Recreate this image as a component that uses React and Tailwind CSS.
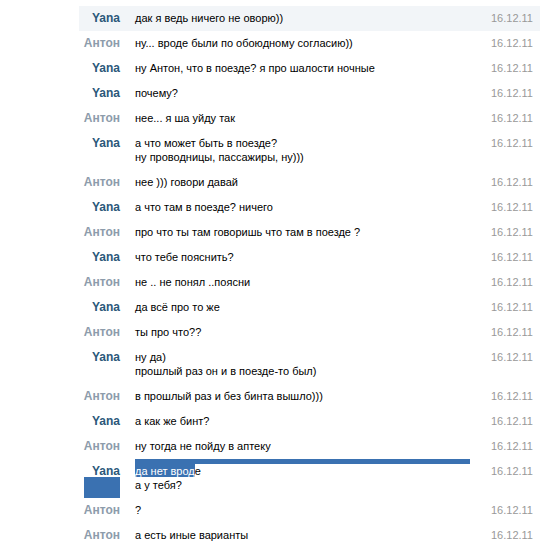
import React from "react";

const rows = [
  { who: "Yana", lines: ["дак я ведь ничего не оворю))"], hl: true },
  { who: "Антон", lines: ["ну... вроде были по обоюдному согласию))"] },
  { who: "Yana", lines: ["ну Антон, что в поезде? я про шалости ночные"] },
  { who: "Yana", lines: ["почему?"] },
  { who: "Антон", lines: ["нее... я ша уйду так"] },
  { who: "Yana", lines: ["а что может быть в поезде?", "ну проводницы, пассажиры, ну)))"] },
  { who: "Антон", lines: ["нее ))) говори давай"] },
  { who: "Yana", lines: ["а что там в поезде? ничего"] },
  { who: "Антон", lines: ["про что ты там говоришь что там в поезде ?"] },
  { who: "Yana", lines: ["что тебе пояснить?"] },
  { who: "Антон", lines: ["не .. не понял ..поясни"] },
  { who: "Yana", lines: ["да всё про то же"] },
  { who: "Антон", lines: ["ты про что??"] },
  { who: "Yana", lines: ["ну да)", "прошлый раз он и в поезде-то был)"] },
  { who: "Антон", lines: ["в прошлый раз и без бинта вышло)))"] },
  { who: "Yana", lines: ["а как же бинт?"] },
  { who: "Антон", lines: ["ну тогда не пойду в аптеку"] },
  { who: "Yana", lines: ["да нет вроде", "а у тебя?"], sel: true },
  { who: "Антон", lines: ["?"] },
  { who: "Антон", lines: ["а есть иные варианты"] },
];

const Row = ({ row }) => {
  const yana = row.who === "Yana";
  return (
    <div className={`flex pt-[5px] pb-[6px] ${row.hl ? "bg-[#f2f5f8]" : ""}`}>
      <div className={`relative w-[41px] shrink-0 text-right text-[12px] font-bold ${yana ? "text-[#2b587a]" : "text-[#8d9cab]"}`}>
        {row.who}
        {row.sel && <div className="absolute left-[5px] top-[13px] w-[36px] h-[21px] bg-[#3a71b1]" />}
      </div>
      <div className="relative ml-[15px] flex-1 text-black">
        {row.sel && <div className="absolute left-0 -top-[5px] w-[335px] h-[5px] bg-[#3a71b1]" />}
        {row.sel ? (
          <>
            <div>
              <span className="relative z-0 inline-block text-white">
                <span className="absolute left-0 right-0 -top-[5px] bottom-[1px] -z-10 bg-[#3a71b1]" />
                да нет врод
              </span>
              е
            </div>
            <div>{row.lines[1]}</div>
          </>
        ) : (
          row.lines.map((l, i) => <div key={i}>{l}</div>)
        )}
      </div>
      <div className="shrink-0 pr-[7px] text-right text-[#999999]">16.12.11</div>
    </div>
  );
};

export default function App() {
  return (
    <div className="w-[549px] h-[543px] overflow-hidden bg-white font-['Liberation_Sans',sans-serif] text-[11px] leading-[14px]">
      <div className="ml-[79px] mt-[6px] w-[461px]">
        {rows.map((r, i) => (
          <Row key={i} row={r} />
        ))}
      </div>
    </div>
  );
}
